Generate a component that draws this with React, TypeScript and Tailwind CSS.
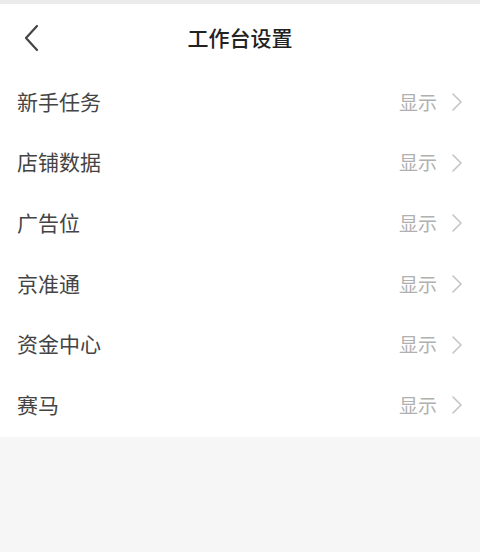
import React from "react";

const items = ["新手任务", "店铺数据", "广告位", "京准通", "资金中心", "赛马"];

export default function App() {
  return (
    <div
      className="w-[480px] h-[552px] bg-[#f6f6f6] flex flex-col"
      style={{ fontFamily: '"Noto Sans CJK SC", "Noto Sans", sans-serif' }}
    >
      <div className="h-[4px] bg-[#ebebeb]" />
      <div className="bg-white">
        <div className="relative h-[67px] flex items-center justify-center pb-[1px]">
          <svg
            className="absolute left-[22px] top-[20px]"
            width="18"
            height="28"
            viewBox="0 0 18 28"
            fill="none"
          >
            <path d="M15 2 L4 14 L15 26" stroke="#444" strokeWidth="2.2" strokeLinecap="round" strokeLinejoin="round" />
          </svg>
          <span className="text-[21px] font-medium text-[#222] leading-none">工作台设置</span>
        </div>
        {items.map((t) => (
          <div key={t} className="h-[60.6px] flex items-center pl-[17px] pr-[17px]">
            <span className="text-[21px] text-[#444] leading-none flex-1">{t}</span>
            <span className="text-[19px] text-[#b0b0b0] leading-none mr-[14px]">显示</span>
            <svg width="12" height="20" viewBox="0 0 12 20" fill="none" className="mt-[2px]">
              <path d="M2 2 L10 10 L2 18" stroke="#c4c4c4" strokeWidth="1.6" strokeLinecap="round" strokeLinejoin="round" />
            </svg>
          </div>
        ))}
        <div className="h-[2px]" />
      </div>
    </div>
  );
}
